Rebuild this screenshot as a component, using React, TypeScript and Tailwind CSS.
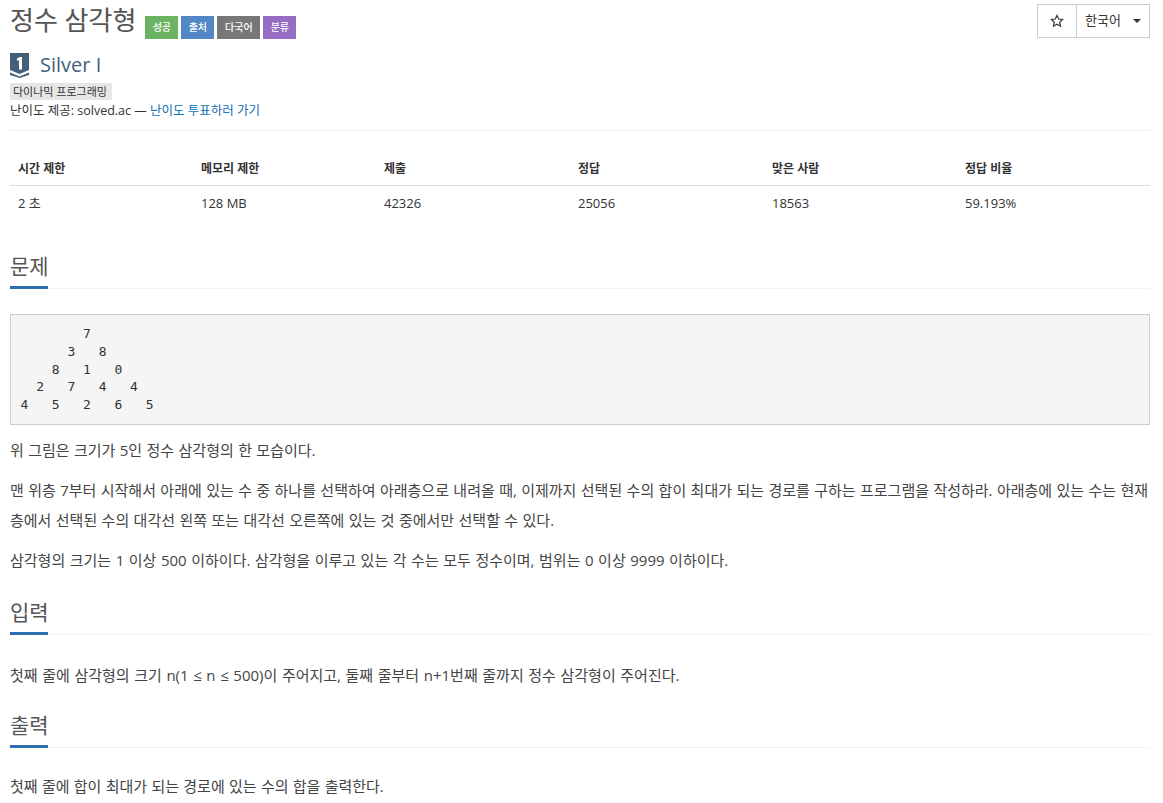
const sans = "font-['Open_Sans','Noto_Sans_CJK_KR',sans-serif]";

const labels = [
  { text: '성공', color: 'bg-[#6cb464]', width: 'w-[33px]' },
  { text: '출처', color: 'bg-[#5187c4]', width: 'w-[33px]' },
  { text: '다국어', color: 'bg-[#777777]', width: 'w-[43px]' },
  { text: '분류', color: 'bg-[#966cc4]', width: 'w-[33px]' },
];

const headers = ['시간 제한', '메모리 제한', '제출', '정답', '맞은 사람', '정답 비율'];
const values = ['2 초', '128 MB', '42326', '25056', '18563', '59.193%'];
const widths = ['w-[183px]', 'w-[183px]', 'w-[194px]', 'w-[194px]', 'w-[193px]', 'w-[193px]'];

const triangle = `        7
      3   8
    8   1   0
  2   7   4   4
4   5   2   6   5`;

function SectionHeader({ title }: { title: string }) {
  return (
    <div className="border-b border-dotted border-[#e5e5e5] h-[39px] flex items-start">
      <h2 className="text-[21px] leading-[32px] text-[#555555] border-b-[3px] border-[#2f6fb0] h-[39px] w-[38px] whitespace-nowrap">{title}</h2>
    </div>
  );
}

export default function App() {
  return (
    <div className={`${sans} w-[1140px] ml-[10px] text-[#333333] text-[15px] bg-white`}>
      <div className="flex justify-between items-start h-[47px]">
        <div className="flex items-start">
          <h1 className="text-[26px] leading-[40px] text-[#555555] whitespace-nowrap [-webkit-text-stroke:0.1px_#555555]">정수 삼각형</h1>
          <div className="flex gap-[3px] ml-[9px] mt-[16px]">
            {labels.map((l) => (
              <span key={l.text} className={`${l.color} ${l.width} h-[23px] flex items-center justify-center text-white text-[10px] font-medium`}>{l.text}</span>
            ))}
          </div>
        </div>
        <div className="flex mt-[4px] h-[34px] border border-[#cccccc] text-[13px]">
          <div className="w-[39px] flex items-center justify-center border-r border-[#cccccc]">
            <svg width="14" height="14" viewBox="0 0 24 24" fill="none" stroke="#333333" strokeWidth="2"><path d="M12 2.5l2.9 6.2 6.7.8-5 4.6 1.4 6.7L12 17.4l-6 3.4 1.4-6.7-5-4.6 6.7-.8z" /></svg>
          </div>
          <div className="w-[72px] flex items-center pl-[8px]">
            <span>한국어</span>
            <span className="ml-[12px] w-0 h-0 border-x-[4px] border-x-transparent border-t-[4px] border-t-[#333333]"></span>
          </div>
        </div>
      </div>

      <div className="flex items-center h-[36px]">
        <svg width="19" height="25" viewBox="0 0 19 25">
          <path d="M0 0h19v17l-9.5 4L0 17z" fill="#435f7a" />
          <path d="M0 19.5l9.5 4 9.5-4V22l-9.5 3L0 22z" fill="#435f7a" />
          <path d="M7 5.5l3-1.5h2v12.5H9V7l-2 1z" fill="#ffffff" />
        </svg>
        <span className="ml-[11px] text-[20px] text-[#435f7a]">Silver I</span>
      </div>

      <div className="h-[17px] flex">
        <span className="bg-[#e6e6e6] px-[3px] text-[11px] leading-[17px] text-[#333333] w-[102px] whitespace-nowrap">다이나믹 프로그래밍</span>
      </div>
      <div className="text-[12.5px] leading-[22px] border-b border-[#eeeeee] h-[31px]">
        난이도 제공: solved.ac — <span className="text-[#0e6fb5]">난이도 투표하러 가기</span>
      </div>

      <table className="mt-[20px] w-[1140px] table-fixed text-[12px] border-collapse">
        <thead>
          <tr className="border-b border-[#dddddd] h-[34px]">
            {headers.map((h, i) => (
              <th key={h} className={`${widths[i]} text-left font-bold pl-[8px] pr-0 pt-[2px]`}>{h}</th>
            ))}
          </tr>
        </thead>
        <tbody>
          <tr className="h-[36px]">
            {values.map((v) => (
              <td key={v} className="pl-[8px] text-[13px]">{v}</td>
            ))}
          </tr>
        </tbody>
      </table>

      <div className="mt-[29px]"><SectionHeader title="문제" /></div>

      <pre className="mt-[25px] h-[111px] bg-[#f5f5f5] border border-[#cccccc] pt-[10px] pl-[9.5px] font-['DejaVu_Sans_Mono',monospace] text-[13px] leading-[17.8px] text-[#333333]">{triangle}</pre>

      <div className="text-[#444444]">
        <p className="mt-[10px] leading-[30px] [word-spacing:0.5px]">위 그림은 크기가 5인 정수 삼각형의 한 모습이다.</p>
        <p className="mt-[10px] leading-[30px] [word-spacing:0.5px]">맨 위층 7부터 시작해서 아래에 있는 수 중 하나를 선택하여 아래층으로 내려올 때, 이제까지 선택된 수의 합이 최대가 되는 경로를 구하는 프로그램을 작성하라. 아래층에 있는 수는 현재 층에서 선택된 수의 대각선 왼쪽 또는 대각선 오른쪽에 있는 것 중에서만 선택할 수 있다.</p>
        <p className="mt-[10px] leading-[30px] [word-spacing:0.65px]">삼각형의 크기는 1 이상 500 이하이다. 삼각형을 이루고 있는 각 수는 모두 정수이며, 범위는 0 이상 9999 이하이다.</p>
      </div>

      <div className="mt-[21px]"><SectionHeader title="입력" /></div>
      <p className="mt-[25px] leading-[30px] [word-spacing:0.7px] text-[#444444]">첫째 줄에 삼각형의 크기 n(1 ≤ n ≤ 500)이 주어지고, 둘째 줄부터 n+1번째 줄까지 정수 삼각형이 주어진다.</p>

      <div className="mt-[19px]"><SectionHeader title="출력" /></div>
      <p className="mt-[23px] leading-[30px] [word-spacing:0.4px] text-[#444444]">첫째 줄에 합이 최대가 되는 경로에 있는 수의 합을 출력한다.</p>
    </div>
  );
}
